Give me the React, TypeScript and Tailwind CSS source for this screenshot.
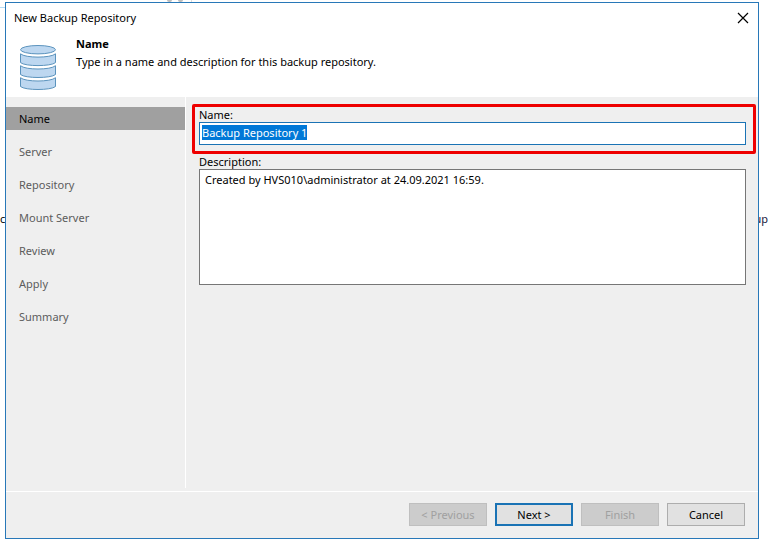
import { useState } from "react";
import clsx from "clsx";

const steps = ["Name", "Server", "Repository", "Mount Server", "Review", "Apply", "Summary"];

const App = () => {
  return (
    <div className="flex min-h-screen bg-white font-['Noto_Sans','Open_Sans',sans-serif] text-[11px] leading-[17px] text-black">
      <div className="flex w-[5px] shrink-0 flex-col overflow-hidden">
        <div className="h-2 border-b border-[#b5dcf5]" />
        <span className="mt-[203px] leading-4">c</span>
      </div>
      <div className="flex min-w-0 flex-1 flex-col">
        <div className="flex h-[2px] gap-1 pl-[162px]">
          <span className="w-[5px] rounded-b-full bg-[#bdbdbd]" />
          <span className="ml-0.5 w-[5px] rounded-b-full bg-[#bdbdbd]" />
          <span className="ml-1 w-px bg-[#dddddd]" />
        </div>
        <Wizard />
        <div className="h-[9px]" />
      </div>
      <div className="flex w-[11px] shrink-0 flex-col overflow-hidden">
        <span className="mt-[211px] flex justify-end pr-0.5 leading-4 text-[#202040]">up</span>
      </div>
    </div>
  );
};

const Wizard = () => {
  const [name, setName] = useState("Backup Repository 1");
  const [description, setDescription] = useState("Created by HVS010\\administrator at 24.09.2021 16:59.");

  return (
    <section className="flex flex-1 flex-col border border-[#2878b8] bg-[#efefef]">
      <header className="flex flex-col bg-white pb-[7px]">
        <div className="flex h-[30px] items-center justify-between pr-[9px] pl-2">
          <h1 className="leading-4">New Backup Repository</h1>
          <button type="button" aria-label="Close">
            <CloseIcon />
          </button>
        </div>
        <div className="flex gap-5 pl-[14px]">
          <div className="pt-3">
            <RepositoryIcon />
          </div>
          <div className="pt-0.5 leading-[18px]">
            <h2 className="font-bold">Name</h2>
            <p>Type in a name and description for this backup repository.</p>
          </div>
        </div>
      </header>
      <div className="flex flex-1">
        <nav className="mb-[3px] w-[180px] shrink-0 border-r border-white pt-[10px]">
          <ul className="flex flex-col gap-[10px]">
            {steps.map((step, i) => (
              <li key={step}>
                <a
                  href="#"
                  className={clsx(
                    "flex h-[23px] items-center pl-[13px]",
                    i === 0 ? "bg-[#a0a0a0] text-black" : "text-[#5c5c5c]"
                  )}
                >
                  {step}
                </a>
              </li>
            ))}
          </ul>
        </nav>
        <main className="min-w-0 flex-1 pt-[7px] pr-[2px] pl-[6px]">
          <div className="flex flex-col rounded-xs border-3 border-[#ee0000] pr-[7px] pb-[6px] pl-[4px]">
            <label htmlFor="name" className="leading-[15px]">
              Name:
            </label>
            <input
              id="name"
              type="text"
              autoFocus
              onFocus={(e) => e.target.select()}
              value={name}
              onChange={(e) => setName(e.target.value)}
              className="h-[23px] border border-[#1a73b5] bg-white px-[2px] pb-0.5 leading-4 outline-none selection:bg-[#0078d7] selection:text-white"
            />
          </div>
          <div className="flex flex-col pr-[10px] pl-[7px]">
            <label htmlFor="description" className="leading-[15px]">
              Description:
            </label>
            <textarea
              id="description"
              value={description}
              onChange={(e) => setDescription(e.target.value)}
              className="h-[116px] resize-none border border-[#767676] bg-white px-[5px] pt-0.5 leading-4 outline-none"
            />
          </div>
        </main>
      </div>
      <footer className="flex justify-end gap-2 border-t border-white pt-[11px] pr-[13px] pb-3">
        <button type="button" disabled className="h-[23px] w-[78px] border border-[#bfbfbf] bg-[#cccccc] text-[#a0a0a0]">
          &lt; Previous
        </button>
        <button type="button" className="h-[23px] w-[78px] border-2 border-[#1a73b5] bg-[#e1e1e1]">
          Next &gt;
        </button>
        <button type="button" disabled className="h-[23px] w-[78px] border border-[#bfbfbf] bg-[#cccccc] text-[#a0a0a0]">
          Finish
        </button>
        <button type="button" className="h-[23px] w-[78px] border border-[#adadad] bg-[#e1e1e1]">
          Cancel
        </button>
      </footer>
    </section>
  );
};

const CloseIcon = () => (
  <svg width="12" height="12" viewBox="0 0 12 12" stroke="black" strokeWidth="1.2">
    <path d="M1 1L11 11M11 1L1 11" />
  </svg>
);

const RepositoryIcon = () => (
  <svg width="36" height="45" viewBox="0 0 36 45" fill="#bdd7f0" stroke="#5b93bd" strokeWidth="1">
    <ellipse cx="18" cy="4.7" rx="17.5" ry="4.2" />
    <path d="M.5 8.8C5 13.2 31 13.2 35.5 8.8V17.6C31 21.6 5 21.6 .5 17.6Z" />
    <path d="M.5 20.7C5 25.1 31 25.1 35.5 20.7V29.5C31 33.5 5 33.5 .5 29.5Z" />
    <path d="M.5 32.7C5 37.1 31 37.1 35.5 32.7V41.5C31 45.5 5 45.5 .5 41.5Z" />
  </svg>
);

export default App;
